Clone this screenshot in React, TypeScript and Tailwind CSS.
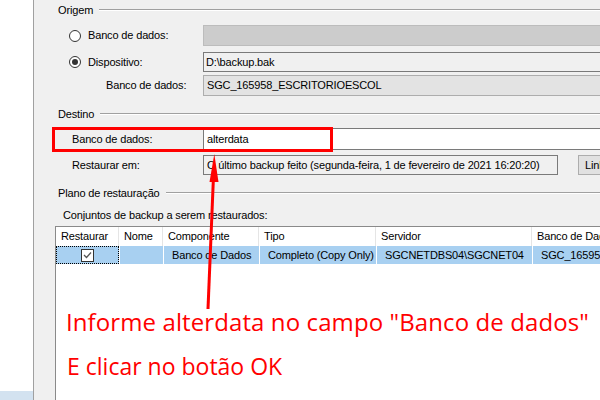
import React from "react";

const ui = { fontFamily: '"Liberation Sans", Arial, sans-serif' };

function GroupHeader({ label }: { label: string }) {
  return (
    <div className="flex items-center h-[14px]">
      <span className="pl-[24px] pr-[6px] leading-none whitespace-nowrap">{label}</span>
      <div className="flex-1 flex flex-col">
        <div className="h-px bg-[#a0a0a0]" />
        <div className="h-px bg-white" />
      </div>
    </div>
  );
}

function Radio({ checked }: { checked?: boolean }) {
  return (
    <div className="w-[12px] h-[12px] rounded-full border border-[#333333] bg-white flex items-center justify-center">
      {checked && <div className="w-[6px] h-[6px] rounded-full bg-[#333333]" />}
    </div>
  );
}

const cols = [63, 44, 96, 117, 156, 120];

export default function App() {
  return (
    <div
      className="relative w-[600px] h-[400px] overflow-hidden bg-white flex text-[11px] tracking-[-0.15px] text-black"
      style={ui}
    >
      {/* left strip */}
      <div className="w-[33px] shrink-0 flex flex-col justify-end">
        <div className="h-[9px] bg-[#d3e2f0]" />
      </div>
      <div className="w-px shrink-0 bg-[#a0a0a0]" />
      {/* main panel */}
      <div className="flex-1 min-w-0 overflow-hidden bg-[#f0f0f0] flex flex-col">
        <div className="mt-[3px]">
          <GroupHeader label="Origem" />
        </div>
        {/* radio 1 */}
        <div className="mt-[8px] h-[21px] flex items-center">
          <div className="w-[169px] shrink-0 flex items-center">
            <div className="ml-[35px]">
              <Radio />
            </div>
            <span className="ml-[7px]">Banco de dados:</span>
          </div>
          <div className="flex-1 h-full bg-[#cccccc] border border-[#bcbcbc] mr-[-2px]" />
        </div>
        {/* radio 2 */}
        <div className="mt-[6px] h-[20px] flex items-center">
          <div className="w-[169px] shrink-0 flex items-center">
            <div className="ml-[35px]">
              <Radio checked />
            </div>
            <span className="ml-[7px]">Dispositivo:</span>
          </div>
          <div className="flex-1 h-full bg-[#f0f0f0] border border-[#7a7a7a] mr-[-2px] flex items-center pl-[2px]">
            D:\backup.bak
          </div>
        </div>
        {/* banco de dados source */}
        <div className="mt-[3px] h-[21px] flex items-center">
          <div className="w-[169px] shrink-0 pl-[72px]">Banco de dados:</div>
          <div className="flex-1 h-full bg-[#e3e3e3] border border-[#adadad] mr-[-2px] flex items-center pl-[3px]">
            SGC_165958_ESCRITORIOESCOL
          </div>
        </div>

        <div className="mt-[11px]">
          <GroupHeader label="Destino" />
        </div>
        <div className="mt-[7px] h-[22px] flex items-center">
          <div className="w-[169px] shrink-0 pl-[38px]">Banco de dados:</div>
          <div className="flex-1 h-full bg-white border border-[#7a7a7a] mr-[-2px] flex items-center pl-[3px]">
            alterdata
          </div>
        </div>
        <div className="mt-[5px] h-[20px] flex items-center">
          <div className="w-[169px] shrink-0 pl-[38px]">Restaurar em:</div>
          <div className="w-[355px] shrink-0 h-full bg-[#f0f0f0] border border-[#7a7a7a] flex items-center pl-[3px] whitespace-nowrap overflow-hidden">
            O último backup feito (segunda-feira, 1 de fevereiro de 2021 16:20:20)
          </div>
          <div className="ml-[20px] w-[100px] shrink-0 h-full bg-[#e1e1e1] border border-[#adadad] flex items-center pl-[6px] whitespace-nowrap">
            Linha do tempo...
          </div>
        </div>

        <div className="mt-[11px]">
          <GroupHeader label="Plano de restauração" />
        </div>
        <div className="mt-[8px] h-[14px] flex items-center pl-[29px] whitespace-nowrap">
          Conjuntos de backup a serem restaurados:
        </div>

        {/* list view */}
        <div className="mt-[4px] ml-[21px] flex-1 bg-white border-l border-t border-[#8a8a8a] flex flex-col">
          <div className="h-[19px] flex">
            {["Restaurar", "Nome", "Componente", "Tipo", "Servidor", "Banco de Dados"].map((h, i) => (
              <div
                key={h}
                style={{ width: cols[i] }}
                className="shrink-0 h-full flex items-center pl-[5px] border-r border-[#e5e5e5] whitespace-nowrap overflow-hidden"
              >
                {h}
              </div>
            ))}
          </div>
          <div className="h-[18px] flex bg-[#a8d0f1]">
            <div
              style={{ width: cols[0] }}
              className="shrink-0 h-full flex items-center justify-center border border-dotted border-black"
            >
              <div className="w-[13px] h-[13px] border border-[#333333] bg-white flex items-center justify-center">
                <svg width="9" height="8" viewBox="0 0 9 8">
                  <path d="M1 4 L3.5 6.5 L8 1.5" fill="none" stroke="#555" strokeWidth="1.3" />
                </svg>
              </div>
            </div>
            {["", "Banco de Dados", "Completo (Copy Only)", "SGCNETDBS04\\SGCNET04", "SGC_165958_ESCRITORIOESCOL"].map(
              (t, i) => (
                <div
                  key={i}
                  style={{ width: cols[i + 1] }}
                  className="shrink-0 h-full flex items-center pl-[8px] border-l border-white whitespace-nowrap overflow-hidden"
                >
                  {t}
                </div>
              )
            )}
          </div>
        </div>
      </div>

      {/* annotation overlay */}
      <div className="absolute left-[52px] top-[127px] w-[281px] h-[25px] border-[3px] border-[#ff0000]" />
      <svg className="absolute left-0 top-0 pointer-events-none" width="600" height="400" viewBox="0 0 600 400">
        <line x1="208" y1="309" x2="213.5" y2="176" stroke="#ff0000" strokeWidth="3" />
        <polygon points="214.3,154 218.5,182 209.5,182" fill="#ff0000" />
      </svg>
      <div
        className="absolute left-[66px] top-[310px] text-[24px] leading-[24px] tracking-[0.1px] text-[#ff0000] whitespace-nowrap"
        style={{ fontFamily: '"Open Sans", sans-serif' }}
      >
        Informe alterdata no campo "Banco de dados"
      </div>
      <div
        className="absolute left-[67px] top-[355px] text-[23px] leading-[23px] tracking-normal text-[#ff0000] whitespace-nowrap"
        style={{ fontFamily: '"Open Sans", sans-serif' }}
      >
        E clicar no botão OK
      </div>
    </div>
  );
}
